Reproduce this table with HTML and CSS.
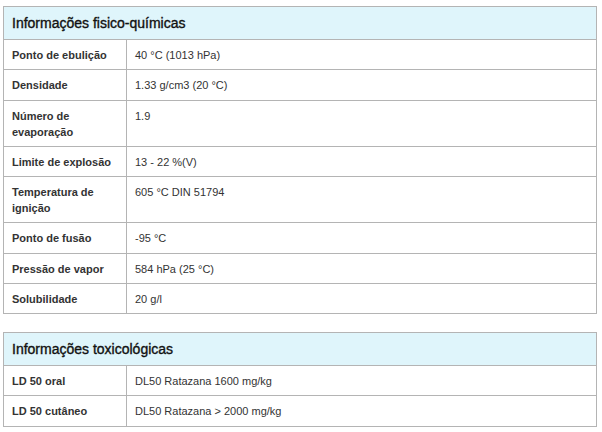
FILE: index.html
```html
<!DOCTYPE html>
<html lang="pt">
<head>
<meta charset="utf-8">
<link rel="stylesheet" href="styles.css">
</head>
<body>
<div class="page">
  <table class="info">
    <colgroup><col class="col-label"><col class="col-value"></colgroup>
    <thead>
      <tr><th colspan="2" class="title">Informações fisico-químicas</th></tr>
    </thead>
    <tbody>
      <tr><td class="label">Ponto de ebulição</td><td class="value">40 °C (1013 hPa)</td></tr>
      <tr><td class="label">Densidade</td><td class="value">1.33 g/cm3 (20 °C)</td></tr>
      <tr><td class="label">Número de evaporação</td><td class="value">1.9</td></tr>
      <tr><td class="label">Limite de explosão</td><td class="value">13 - 22 %(V)</td></tr>
      <tr><td class="label">Temperatura de ignição</td><td class="value">605 °C DIN 51794</td></tr>
      <tr><td class="label">Ponto de fusão</td><td class="value">-95 °C</td></tr>
      <tr><td class="label">Pressão de vapor</td><td class="value">584 hPa (25 °C)</td></tr>
      <tr><td class="label">Solubilidade</td><td class="value">20 g/l</td></tr>
    </tbody>
  </table>
  <table class="info">
    <colgroup><col class="col-label"><col class="col-value"></colgroup>
    <thead>
      <tr><th colspan="2" class="title">Informações toxicológicas</th></tr>
    </thead>
    <tbody>
      <tr><td class="label">LD 50 oral</td><td class="value">DL50 Ratazana 1600 mg/kg</td></tr>
      <tr><td class="label">LD 50 cutâneo</td><td class="value">DL50 Ratazana &gt; 2000 mg/kg</td></tr>
    </tbody>
  </table>
</div>
</body>
</html>
```
FILE: styles.css
```css
html, body {
  margin: 0;
  padding: 0;
  background: #ffffff;
}
body {
  font-family: "Liberation Sans", Arial, sans-serif;
  color: #333333;
}
.page {
  padding: 6px 0 0 3px;
  width: 594px;
  display: flex;
  flex-direction: column;
  gap: 18px;
}
.info {
  width: 594px;
  border-collapse: collapse;
  table-layout: fixed;
}
.col-label {
  width: 123px;
}
.info th, .info td {
  border: 1px solid #b4b4b4;
  text-align: left;
  vertical-align: top;
}
.title {
  background: #dff5fb;
  color: #111111;
  font-size: 14px;
  font-weight: normal;
  -webkit-text-stroke: 0.35px #111111;
  line-height: 18px;
  padding: 7px 8px;
}
.label {
  font-size: 11px;
  font-weight: bold;
  line-height: 16px;
  padding: 7px 8px 6.25px;
}
.value {
  font-size: 11px;
  line-height: 16px;
  padding: 7px 8px 6.25px;
}
```
